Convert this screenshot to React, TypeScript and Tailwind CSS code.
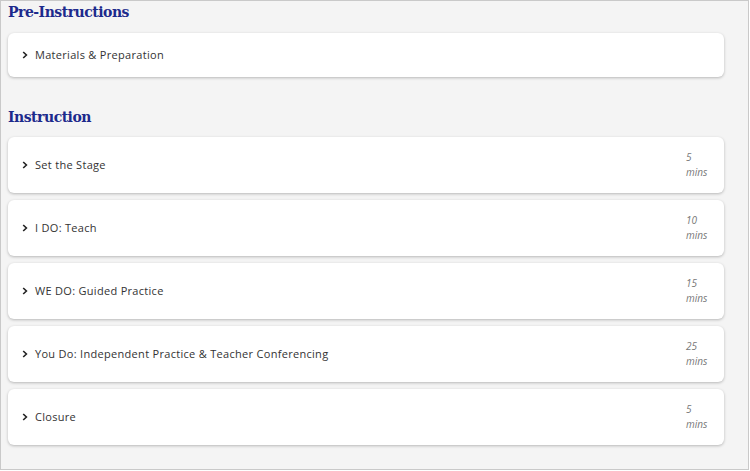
import React from "react";

const items = [
  { title: "Set the Stage", time: "5" },
  { title: "I DO: Teach", time: "10" },
  { title: "WE DO: Guided Practice", time: "15" },
  { title: "You Do: Independent Practice & Teacher Conferencing", time: "25" },
  { title: "Closure", time: "5" },
];

function Chevron() {
  return (
    <svg width="6" height="8" viewBox="0 0 6 8" className="shrink-0">
      <path d="M1.2 1 L4.4 4 L1.2 7" fill="none" stroke="#222" strokeWidth="1.6" />
    </svg>
  );
}

export default function App() {
  return (
    <div
      className="w-[749px] h-[470px] border border-[#c9c9c9] bg-[#f4f4f4] px-[7px] pt-[1px] overflow-hidden"
      style={{ fontFamily: "'Open Sans', sans-serif" }}
    >
      <h2
        className="text-[14px] leading-[20px] font-bold tracking-[-0.5px] text-[#1d2a8c]"
        style={{ fontFamily: "'DejaVu Serif', serif" }}
      >
        Pre-Instructions
      </h2>
      <div className="mt-[11px] h-[44px] w-[716px] bg-white rounded-[6px] shadow-[0_1px_3px_rgba(0,0,0,0.25)] flex items-center pl-[14px] gap-[7px]">
        <Chevron />
        <span className="text-[11px] tracking-[0.3px] text-[#333]">Materials &amp; Preparation</span>
      </div>
      <h2
        className="mt-[30px] text-[14px] leading-[20px] font-bold tracking-[-0.5px] text-[#1d2a8c]"
        style={{ fontFamily: "'DejaVu Serif', serif" }}
      >
        Instruction
      </h2>
      <div className="mt-[10px] flex flex-col gap-[7px] w-[716px]">
        {items.map((it) => (
          <div
            key={it.title}
            className="h-[56px] bg-white rounded-[6px] shadow-[0_1px_3px_rgba(0,0,0,0.25)] flex items-center pl-[14px] pr-[12px]"
          >
            <div className="flex items-center gap-[7px] flex-1">
              <Chevron />
              <span className="text-[11px] tracking-[0.3px] text-[#333]">{it.title}</span>
            </div>
            <div className="w-[26px] text-[10px] leading-[15px] italic text-[#777]">
              {it.time}
              <br />
              mins
            </div>
          </div>
        ))}
      </div>
    </div>
  );
}
